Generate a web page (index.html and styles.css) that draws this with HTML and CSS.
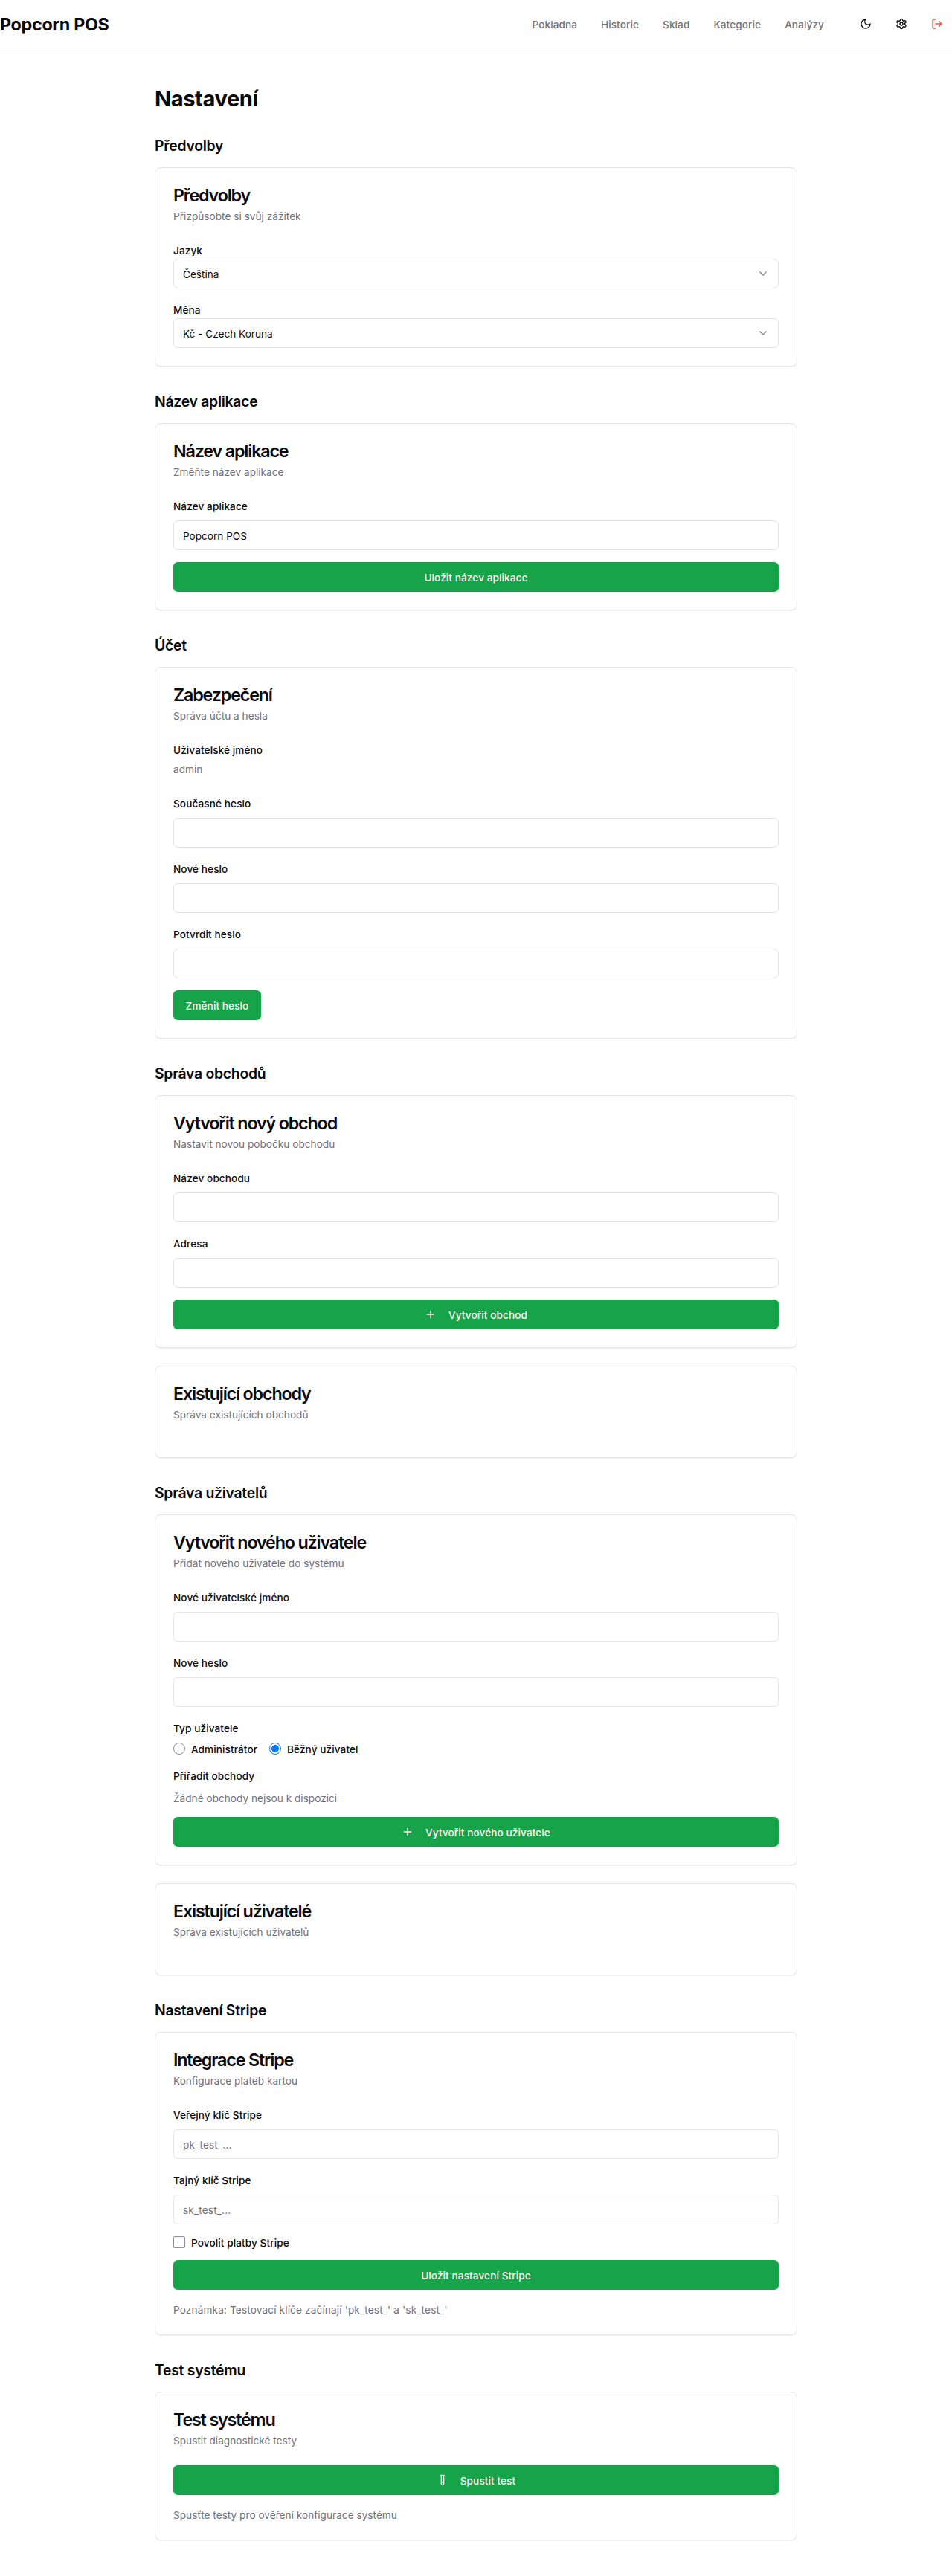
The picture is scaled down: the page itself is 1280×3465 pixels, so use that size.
FILE: index.html
```html
<!DOCTYPE html>
<html lang="cs">
<head>
<meta charset="utf-8">
<title>Popcorn POS – Nastavení</title>
<link rel="stylesheet" href="styles.css">
</head>
<body>
<header class="topbar">
  <div class="brand">Popcorn POS</div>
  <div class="topbar-right">
    <nav class="nav">
      <a class="nav-link">Pokladna</a>
      <a class="nav-link">Historie</a>
      <a class="nav-link">Sklad</a>
      <a class="nav-link">Kategorie</a>
      <a class="nav-link">Analýzy</a>
    </nav>
    <div class="actions">
      <button class="icon-btn" aria-label="Motiv"><svg class="icon" viewBox="0 0 24 24"><path d="M12 3a6 6 0 0 0 9 9 9 9 0 1 1-9-9Z"/></svg></button>
      <button class="icon-btn" aria-label="Nastavení"><svg class="icon" viewBox="0 0 24 24"><path d="M12.22 2h-.44a2 2 0 0 0-2 2v.18a2 2 0 0 1-1 1.73l-.43.25a2 2 0 0 1-2 0l-.15-.08a2 2 0 0 0-2.73.73l-.22.38a2 2 0 0 0 .73 2.73l.15.1a2 2 0 0 1 1 1.72v.51a2 2 0 0 1-1 1.74l-.15.09a2 2 0 0 0-.73 2.73l.22.38a2 2 0 0 0 2.73.73l.15-.08a2 2 0 0 1 2 0l.43.25a2 2 0 0 1 1 1.73V20a2 2 0 0 0 2 2h.44a2 2 0 0 0 2-2v-.18a2 2 0 0 1 1-1.73l.43-.25a2 2 0 0 1 2 0l.15.08a2 2 0 0 0 2.73-.73l.22-.39a2 2 0 0 0-.73-2.73l-.15-.08a2 2 0 0 1-1-1.74v-.5a2 2 0 0 1 1-1.74l.15-.09a2 2 0 0 0 .73-2.73l-.22-.38a2 2 0 0 0-2.73-.73l-.15.08a2 2 0 0 1-2 0l-.43-.25a2 2 0 0 1-1-1.73V4a2 2 0 0 0-2-2z"/><circle cx="12" cy="12" r="3"/></svg></button>
      <button class="icon-btn danger" aria-label="Odhlásit"><svg class="icon" viewBox="0 0 24 24"><path d="M9 21H5a2 2 0 0 1-2-2V5a2 2 0 0 1 2-2h4"/><polyline points="16 17 21 12 16 7"/><line x1="21" x2="9" y1="12" y2="12"/></svg></button>
    </div>
  </div>
</header>

<main class="page">
  <h1 class="page-title">Nastavení</h1>

  <section class="section">
    <h2 class="section-title">Předvolby</h2>
    <div class="card">
      <div class="card-header"><h3 class="card-title">Předvolby</h3><p class="muted">Přizpůsobte si svůj zážitek</p></div>
      <div class="card-content stack">
        <div><label class="label">Jazyk</label>
          <button class="select"><span>Čeština</span><svg class="icon faded" viewBox="0 0 24 24"><path d="m6 9 6 6 6-6"/></svg></button></div>
        <div><label class="label">Měna</label>
          <button class="select"><span>Kč - Czech Koruna</span><svg class="icon faded" viewBox="0 0 24 24"><path d="m6 9 6 6 6-6"/></svg></button></div>
      </div>
    </div>
  </section>

  <section class="section">
    <h2 class="section-title">Název aplikace</h2>
    <div class="card">
      <div class="card-header"><h3 class="card-title">Název aplikace</h3><p class="muted">Změňte název aplikace</p></div>
      <div class="card-content stack">
        <div class="field"><label class="label">Název aplikace</label><input class="input" type="text" value="Popcorn POS"></div>
        <button class="btn">Uložit název aplikace</button>
      </div>
    </div>
  </section>

  <section class="section">
    <h2 class="section-title">Účet</h2>
    <div class="card">
      <div class="card-header"><h3 class="card-title">Zabezpečení</h3><p class="muted">Správa účtu a hesla</p></div>
      <div class="card-content account">
        <div><label class="label">Uživatelské jméno</label><p class="muted username">admin</p></div>
        <form class="stack">
          <div class="field"><label class="label">Současné heslo</label><input class="input" type="password"></div>
          <div class="field"><label class="label">Nové heslo</label><input class="input" type="password"></div>
          <div class="field"><label class="label">Potvrdit heslo</label><input class="input" type="password"></div>
          <button class="btn btn-auto" type="button">Změnit heslo</button>
        </form>
      </div>
    </div>
  </section>

  <section class="section">
    <h2 class="section-title">Správa obchodů</h2>
    <div class="cards">
      <div class="card">
        <div class="card-header"><h3 class="card-title">Vytvořit nový obchod</h3><p class="muted">Nastavit novou pobočku obchodu</p></div>
        <div class="card-content stack">
          <div class="field"><label class="label">Název obchodu</label><input class="input" type="text"></div>
          <div class="field"><label class="label">Adresa</label><input class="input" type="text"></div>
          <button class="btn"><svg class="icon btn-icon" viewBox="0 0 24 24"><path d="M5 12h14"/><path d="M12 5v14"/></svg><span>Vytvořit obchod</span></button>
        </div>
      </div>
      <div class="card">
        <div class="card-header"><h3 class="card-title">Existující obchody</h3><p class="muted">Správa existujících obchodů</p></div>
        <div class="card-content"></div>
      </div>
    </div>
  </section>

  <section class="section">
    <h2 class="section-title">Správa uživatelů</h2>
    <div class="cards">
      <div class="card">
        <div class="card-header"><h3 class="card-title">Vytvořit nového uživatele</h3><p class="muted">Přidat nového uživatele do systému</p></div>
        <div class="card-content stack">
          <div class="field"><label class="label">Nové uživatelské jméno</label><input class="input" type="text"></div>
          <div class="field"><label class="label">Nové heslo</label><input class="input" type="password"></div>
          <div class="field"><label class="label">Typ uživatele</label>
            <div class="options">
              <div class="option"><input class="radio" type="radio" name="role" id="r-admin"><label class="label" for="r-admin">Administrátor</label></div>
              <div class="option"><input class="radio" type="radio" name="role" id="r-user" checked><label class="label" for="r-user">Běžný uživatel</label></div>
            </div>
          </div>
          <div class="field"><label class="label">Přiřadit obchody</label><p class="muted">Žádné obchody nejsou k dispozici</p></div>
          <button class="btn"><svg class="icon btn-icon" viewBox="0 0 24 24"><path d="M5 12h14"/><path d="M12 5v14"/></svg><span>Vytvořit nového uživatele</span></button>
        </div>
      </div>
      <div class="card">
        <div class="card-header"><h3 class="card-title">Existující uživatelé</h3><p class="muted">Správa existujících uživatelů</p></div>
        <div class="card-content"></div>
      </div>
    </div>
  </section>

  <section class="section">
    <h2 class="section-title">Nastavení Stripe</h2>
    <div class="card">
      <div class="card-header"><h3 class="card-title">Integrace Stripe</h3><p class="muted">Konfigurace plateb kartou</p></div>
      <div class="card-content stack">
        <div class="field"><label class="label">Veřejný klíč Stripe</label><input class="input" type="text" placeholder="pk_test_..."></div>
        <div class="field"><label class="label">Tajný klíč Stripe</label><input class="input" type="password" placeholder="sk_test_..."></div>
        <div class="option"><input class="checkbox" type="checkbox" id="stripe-on"><label class="label" for="stripe-on">Povolit platby Stripe</label></div>
        <button class="btn">Uložit nastavení Stripe</button>
        <p class="muted note">Poznámka: Testovací klíče začínají 'pk_test_' a 'sk_test_'</p>
      </div>
    </div>
  </section>

  <section class="section">
    <h2 class="section-title">Test systému</h2>
    <div class="card">
      <div class="card-header"><h3 class="card-title">Test systému</h3><p class="muted">Spustit diagnostické testy</p></div>
      <div class="card-content stack">
        <button class="btn"><svg class="icon btn-icon" viewBox="0 0 24 24"><path d="M14.5 2v17.5c0 1.4-1.1 2.5-2.5 2.5s-2.5-1.1-2.5-2.5V2"/><path d="M8.5 2h7"/><path d="M14.5 16h-5"/></svg><span>Spustit test</span></button>
        <p class="muted">Spusťte testy pro ověření konfigurace systému</p>
      </div>
    </div>
  </section>
</main>
</body>
</html>
```
FILE: styles.css
```css
*, *::before, *::after { box-sizing: border-box; margin: 0; padding: 0; }

body {
  font-family: Inter, "Noto Sans", sans-serif;
  font-size: 16px;
  line-height: 24px;
  color: #09090b;
  background: #fff;
}

button, input { font: inherit; color: inherit; }

.topbar {
  display: flex;
  align-items: center;
  justify-content: space-between;
  height: 65px;
  border-bottom: 1px solid #e4e4e7;
}
.brand {
  padding-top: 2px;
  font-size: 23.3px;
  line-height: 32px;
  font-weight: 700;
  letter-spacing: -.3px;
}
.topbar-right { display: flex; align-items: center; gap: 36px; }
.nav { display: flex; gap: 32px; padding-top: 2px; }
.nav-link {
  font-size: 13.6px;
  line-height: 20px;
  font-weight: 500;
  letter-spacing: .08px;
  color: #737375;
}
.actions { display: flex; gap: 8px; }
.icon-btn {
  display: flex;
  align-items: center;
  justify-content: center;
  width: 40px;
  height: 40px;
  border: 0;
  background: none;
}
.danger { color: #f75252; }

.icon {
  width: 16px;
  height: 16px;
  flex: none;
  fill: none;
  stroke: currentColor;
  stroke-width: 2;
  stroke-linecap: round;
  stroke-linejoin: round;
}
.faded { opacity: .5; }

.page { max-width: 896px; margin: 0 auto; padding: 48px 16px; }
.page-title {
  margin-bottom: 32px;
  padding-top: 3px;
  font-size: 29.1px;
  line-height: 33px;
  font-weight: 700;
  letter-spacing: -.42px;
}
.section + .section { margin-top: 32px; }
.section-title {
  margin-bottom: 16px;
  padding-top: 2px;
  font-size: 19.4px;
  line-height: 26px;
  font-weight: 600;
  letter-spacing: -.27px;
}

.cards { display: flex; flex-direction: column; gap: 24px; }
.card {
  border: 1px solid #e4e4e7;
  border-radius: 8px;
  background: #fff;
  box-shadow: 0 1px 2px rgba(0, 0, 0, .05);
}
.card-header { display: flex; flex-direction: column; gap: 6px; padding: 24px; }
.card-title {
  padding-top: 2px;
  font-size: 23.3px;
  line-height: 22px;
  font-weight: 600;
  letter-spacing: -1.17px;
}
.card-content { padding: 0 24px 24px; }
.muted {
  padding-top: 2px;
  font-size: 13.6px;
  line-height: 18px;
  letter-spacing: .03px;
  color: #71717a;
}
.note { letter-spacing: .15px; }

.stack { display: flex; flex-direction: column; gap: 16px; }
.account { display: flex; flex-direction: column; gap: 24px; }
.username { margin-top: 4px; }
.field > * + * { margin-top: 8px; }
.label { font-size: 13.6px; line-height: 14px; font-weight: 500; letter-spacing: .09px; }

.input, .select {
  display: flex;
  align-items: center;
  width: 100%;
  height: 40px;
  padding: 10px 12px 8px;
  border: 1px solid #e4e4e7;
  border-radius: 6px;
  background: #fff;
  font-size: 13.6px;
  line-height: 20px;
}
.select { justify-content: space-between; padding: 8px 12px; }
.select span { padding-top: 2px; }
.input::placeholder { color: #71717a; letter-spacing: .15px; }

.btn {
  display: flex;
  align-items: center;
  justify-content: center;
  gap: 8px;
  height: 40px;
  padding: 10px 16px 8px;
  border: 0;
  border-radius: 6px;
  background: #16a34a;
  color: #fff1f2;
  font-size: 13.6px;
  line-height: 20px;
  font-weight: 500;
  letter-spacing: .09px;
}
.btn-auto { align-self: flex-start; width: 118px; }
.btn-icon { margin: 0 8px 2px 0; }

.options { display: flex; gap: 16px; }
.option { display: flex; align-items: center; gap: 8px; height: 16px; }
.option .label { padding-top: 2px; }

.radio, .checkbox {
  appearance: none;
  width: 16px;
  height: 16px;
  flex: none;
  border: 1px solid #8e8e9f;
  background: #fff;
}
.radio { border-radius: 50%; }
.radio:checked {
  border-color: #007aff;
  background: radial-gradient(circle, #007aff 4.6px, #fff 5.3px);
}
.checkbox { border-radius: 2px; }
```
